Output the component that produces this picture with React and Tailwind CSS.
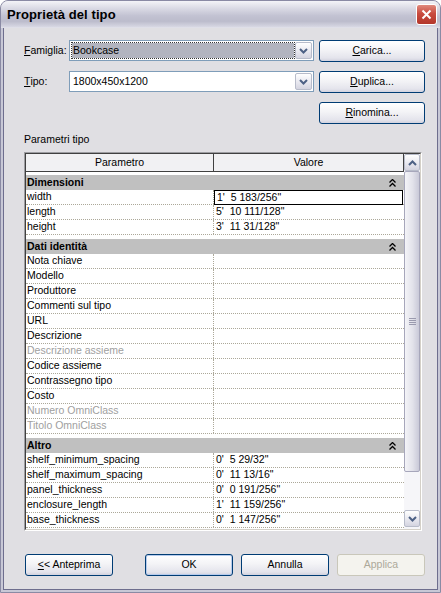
import React from 'react';

const groups = [
    {
        name: 'Dimensioni',
        rows: [
            ['width', "1'  5 183/256\"", false, true],
            ['length', "5'  10 111/128\""],
            ['height', "3'  11 31/128\""],
        ],
    },
    {
        name: 'Dati identità',
        rows: [
            ['Nota chiave'],
            ['Modello'],
            ['Produttore'],
            ['Commenti sul tipo'],
            ['URL'],
            ['Descrizione'],
            ['Descrizione assieme', '', true],
            ['Codice assieme'],
            ['Contrassegno tipo'],
            ['Costo'],
            ['Numero OmniClass', '', true],
            ['Titolo OmniClass', '', true],
        ],
    },
    {
        name: 'Altro',
        rows: [
            ['shelf_minimum_spacing', "0'  5 29/32\""],
            ['shelf_maximum_spacing', "0'  11 13/16\""],
            ['panel_thickness', "0'  0 191/256\""],
            ['enclosure_length', "1'  11 159/256\""],
            ['base_thickness', "0'  1 147/256\""],
        ],
    },
];

function XpButton({ children, disabled, isDefault, className = '' }) {
    const base = disabled
        ? 'border-[#c9c7ba] bg-[#f4f3ee] text-[#aca899]'
        : 'border-[#003c74] bg-[linear-gradient(to_bottom,#ffffff_0%,#f3f3f6_45%,#e4e4ec_85%,#d2d2de_100%)] text-black';
    const ring = isDefault ? 'shadow-[inset_0_0_0_1px_#b6cbec]' : '';
    return (
        <div className={`h-[22px] flex items-center justify-center rounded-[3px] border ${base} ${ring} ${className}`}>
            {children}
        </div>
    );
}

function ChevronDown({ color = '#4d6185' }) {
    return (
        <svg width="9" height="6" viewBox="0 0 9 6">
            <path d="M1 1 L4.5 4.5 L8 1" fill="none" stroke={color} strokeWidth="2" />
        </svg>
    );
}

function ChevronUp({ color = '#4d6185' }) {
    return (
        <svg width="9" height="6" viewBox="0 0 9 6">
            <path d="M1 5 L4.5 1.5 L8 5" fill="none" stroke={color} strokeWidth="2" />
        </svg>
    );
}

function DoubleUp() {
    return (
        <svg width="7" height="8" viewBox="0 0 7 8">
            <path d="M0.5 3.5 L3.5 0.5 L6.5 3.5 M0.5 7.5 L3.5 4.5 L6.5 7.5" fill="none" stroke="#000" strokeWidth="1.3" />
        </svg>
    );
}

function Combo({ value, selected }) {
    return (
        <div className="w-[245px] h-[21px] border border-[#7f9db9] bg-white flex items-stretch p-[1px]">
            <div className="flex-1 flex items-center p-[1px]">
                <div className={`h-full w-full flex items-center pl-[1px] ${selected ? 'bg-[#b2b4bf] outline outline-1 outline-dotted outline-[#333]' : ''}`}>
                    {value}
                </div>
            </div>
            <div className="w-[17px] rounded-[2px] border border-[#b8bcca] bg-[linear-gradient(to_bottom,#ffffff,#e6e6ee_60%,#d4d4e0)] flex items-center justify-center">
                <ChevronDown />
            </div>
        </div>
    );
}

export default function App() {
    return (
        <div className="w-[441px] h-[593px] flex flex-col bg-[#c8c8d6] border border-[#8a8aa4] rounded-t-[8px] overflow-hidden font-['Liberation_Sans',Arial,sans-serif] text-[10.5px] text-black">
            {/* Title bar */}
            <div className="h-[27px] shrink-0 flex items-center justify-between pl-[6px] pr-[3px] bg-[linear-gradient(to_bottom,#f4f4f8_0%,#dcdce6_25%,#c2c2d2_55%,#bcbccc_75%,#d6d6e2_95%,#e4e4ec_100%)]">
                <span className="text-[13px] font-bold tracking-[0.1px]">Proprietà del tipo</span>
                <div className="w-[21px] h-[21px] rounded-[3px] border border-white bg-[linear-gradient(to_bottom,#e08a7e,#c94b3f_45%,#b3362b)] flex items-center justify-center">
                    <svg width="11" height="11" viewBox="0 0 11 11">
                        <path d="M1.5 1.5 L9.5 9.5 M9.5 1.5 L1.5 9.5" stroke="#fff" strokeWidth="2" />
                    </svg>
                </div>
            </div>

            {/* Body */}
            <div className="flex-1 mx-[2px] mb-[2px] border border-t-0 border-[#6e6e8e] bg-[#e0dfe3] flex flex-col pl-[20px] pr-[12px] pt-[12px]">
                <div className="flex flex-col gap-[9px]">
                    <div className="flex items-start h-[22px]">
                        <div className="w-[45px] h-[21px] flex items-center"><span className="underline">F</span>amiglia:</div>
                        <Combo value="Bookcase" selected />
                        <XpButton className="w-[106px] ml-[5px]"><span><span className="underline">C</span>arica...</span></XpButton>
                    </div>
                    <div className="flex items-start h-[22px]">
                        <div className="w-[45px] h-[21px] flex items-center"><span className="underline">T</span>ipo:</div>
                        <Combo value="1800x450x1200" />
                        <XpButton className="w-[106px] ml-[5px]"><span><span className="underline">D</span>uplica...</span></XpButton>
                    </div>
                    <div className="flex items-start h-[22px] justify-end">
                        <XpButton className="w-[106px]"><span><span className="underline">R</span>inomina...</span></XpButton>
                    </div>
                </div>

                <div className="mt-[9px] h-[13px] leading-[13px]">Parametri tipo</div>

                {/* Grid */}
                <div className="mt-[6px] w-[398px] h-[379px] border border-t-[#9d9da1] border-l-[#9d9da1] border-b-white border-r-white">
                    <div className="h-full border border-t-[#404040] border-l-[#404040] border-b-[#d4d0c8] border-r-[#d4d0c8] flex bg-white">
                        <div className="flex-1 flex flex-col">
                            <div className="h-[18px] flex border-b border-[#404040] bg-[#f1f1f3]">
                                <div className="w-[188px] border-r border-[#404040] flex items-center justify-center">Parametro</div>
                                <div className="flex-1 border-r border-[#404040] flex items-center justify-center">Valore</div>
                            </div>
                            {groups.map((g, gi) => (
                                <div key={g.name} className={gi === 0 ? 'pt-[3px]' : 'pt-[4px]'}>
                                    <div className="h-[15px] bg-[#c0c0c0] flex items-center justify-between pl-[1px] pr-[8px] font-bold">
                                        <span>{g.name}</span>
                                        <DoubleUp />
                                    </div>
                                    {g.rows.map(([label, value = '', disabled, editing]) => (
                                        <div key={label} className="h-[15px] flex border-b border-dotted border-[#aca899]">
                                            <div className={`w-[188px] pl-[1px] flex items-center border-r border-dotted border-[#aca899] ${disabled ? 'text-[#a0a0a0]' : ''}`}>
                                                {label}
                                            </div>
                                            <div className={`flex-1 flex items-center pl-[2px] whitespace-pre ${editing ? 'border border-black -mb-[1px] mr-[1px]' : ''}`}>
                                                {value}
                                            </div>
                                        </div>
                                    ))}
                                </div>
                            ))}
                        </div>

                        {/* Scrollbar */}
                        <div className="w-[16px] flex flex-col bg-[#f6f6f9] pb-[2px]">
                            <div className="h-[17px] rounded-[2px] border border-[#b8bcca] bg-[linear-gradient(to_bottom,#ffffff,#e6e6ee_60%,#d4d4e0)] flex items-center justify-center">
                                <ChevronUp />
                            </div>
                            <div className="h-[301px] rounded-[2px] border border-[#a7a7bb] bg-[linear-gradient(to_right,#f4f4f8,#e2e2ea_55%,#c9c9d8)] flex items-center justify-center">
                                <div className="flex flex-col gap-[1px]">
                                    <div className="w-[7px] h-[1px] bg-[#9a9aae]" />
                                    <div className="w-[7px] h-[1px] bg-[#9a9aae]" />
                                    <div className="w-[7px] h-[1px] bg-[#9a9aae]" />
                                    <div className="w-[7px] h-[1px] bg-[#9a9aae]" />
                                </div>
                            </div>
                            <div className="flex-1" />
                            <div className="h-[17px] rounded-[2px] border border-[#b8bcca] bg-[linear-gradient(to_bottom,#ffffff,#e6e6ee_60%,#d4d4e0)] flex items-center justify-center">
                                <ChevronDown />
                            </div>
                        </div>
                    </div>
                </div>

                {/* Bottom buttons */}
                <div className="mt-[23px] flex items-center">
                    <XpButton className="w-[88px] ml-[1px]"><span><span className="underline">&lt;</span>&lt; Anteprima</span></XpButton>
                    <div className="flex-1" />
                    <div className="flex gap-[8px]">
                        <XpButton className="w-[88px]" isDefault>OK</XpButton>
                        <XpButton className="w-[88px]">Annulla</XpButton>
                        <XpButton className="w-[88px]" disabled>Applica</XpButton>
                    </div>
                </div>
            </div>
        </div>
    );
}
